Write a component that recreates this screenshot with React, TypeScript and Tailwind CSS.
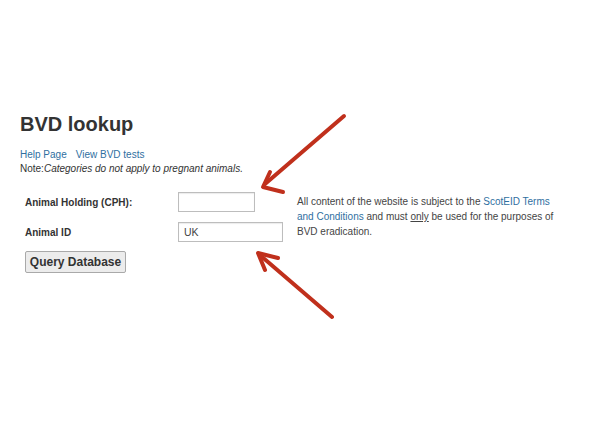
export default function App() {
  return (
    <div className="relative w-[592px] h-[444px] bg-white text-[#333] font-['Liberation_Sans',Arial,sans-serif] overflow-hidden">
      <div className="pt-[112px] px-[20px]">
        <h1 className="text-[20px] leading-[24px] font-bold">BVD lookup</h1>

        <div className="mt-[12px] text-[10px] leading-[14px]">
          <div className="flex gap-[9px] text-[#2f6f9f]">
            <a>Help Page</a>
            <a>View BVD tests</a>
          </div>
          <p>
            Note:<i>Categories do not apply to pregnant animals.</i>
          </p>
        </div>

        <div className="mt-[16px] ml-[5px] flex">
          <div className="w-[272px]">
            <div className="grid grid-cols-[153px_auto] gap-y-[10px] items-center">
              <label className="text-[10px] font-bold">Animal Holding (CPH):</label>
              <input className="w-[77px] h-[20px] border border-[#bdbdbd] shadow-[inset_0_1px_1px_rgba(0,0,0,0.08)] px-[5px] text-[10px] outline-none" />
              <label className="text-[10px] font-bold">Animal ID</label>
              <input
                defaultValue="UK"
                className="w-[105px] h-[20px] border border-[#bdbdbd] shadow-[inset_0_1px_1px_rgba(0,0,0,0.08)] px-[5px] text-[10.5px] text-[#444] outline-none"
              />
            </div>
            <button className="mt-[9px] w-[101px] h-[22px] bg-[#ececec] border border-[#a9a9a9] rounded-[2px] text-[12px] font-bold text-[#333]">
              Query Database
            </button>
          </div>

          <p className="mt-[2px] w-[262px] text-[10px] leading-[15px] text-[#444]">
            All content of the website is subject to the{" "}
            <a className="text-[#2f6f9f]">ScotEID Terms and Conditions</a> and must{" "}
            <u>only</u> be used for the purposes of BVD eradication.
          </p>
        </div>
      </div>

      {/* hand-drawn arrows laid over the screenshot */}
      <svg className="absolute inset-0" width="592" height="444" viewBox="0 0 592 444" fill="none">
        <g stroke="#c0301c" strokeWidth="4" strokeLinecap="round" strokeLinejoin="round">
          <path d="M344 116 L265 184" />
          <path d="M270 172 L263 187 L283 192" />
          <path d="M332 317 L261 256" />
          <path d="M278 258 L258 253 L265 270" />
        </g>
      </svg>
    </div>
  );
}
